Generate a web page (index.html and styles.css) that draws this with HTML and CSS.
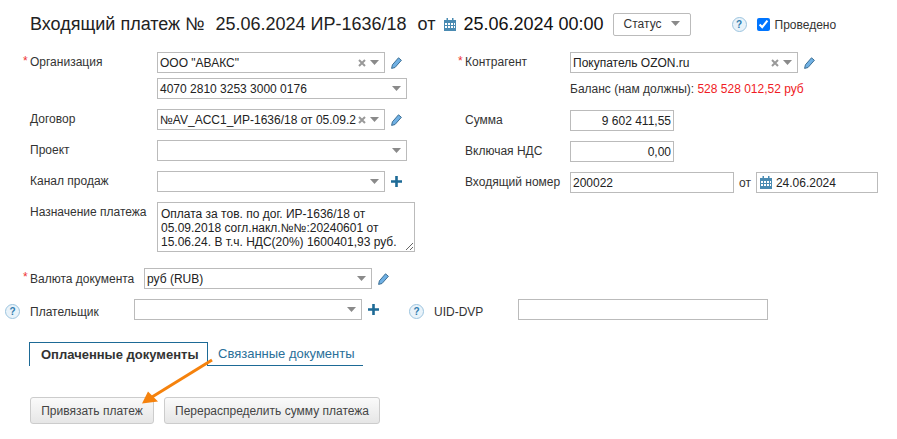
FILE: index.html
```html
<!DOCTYPE html>
<html lang="en">
<head>
    <meta charset="UTF-8">
    <title>Входящий платеж</title>
    <link rel="stylesheet" href="styles.css">
</head>
<body>
    <svg class="sprites" width="0" height="0">
        <symbol id="i-caret" viewBox="0 0 9 5"><path d="M0 0h9L4.5 5z" fill="#8a8a8a"/></symbol>
        <symbol id="i-clear" viewBox="0 0 8 8"><path d="M1 1l6 6M7 1L1 7" stroke="#999" stroke-width="2" fill="none"/></symbol>
        <symbol id="i-pencil" viewBox="0 0 11 12"><path d="M7.5 .8L10.400 3.300 4 10.500 .6 11.400l.8-3.600z" fill="#6fb0e4" stroke="#3d6f93" stroke-width="1"/></symbol>
        <symbol id="i-plus" viewBox="0 0 11 11"><path d="M5.5 0v11M0 5.500h11" stroke="#1d6a96" stroke-width="2.600" fill="none"/></symbol>
        <symbol id="i-cal" viewBox="0 0 12 13">
            <path d="M0 2h12v11H0z" fill="#4a8bb2"/>
            <path d="M2.500 0h1.500v3H2.500zM8 0h1.500v3H8z" fill="#4a8bb2"/>
            <path d="M1 5h2v2H1zM4 5h2v2H4zM7 5h2v2H7zM10 5h1v2h-1zM1 8h2v2H1zM4 8h2v2H4zM7 8h2v2H7zM10 8h1v2h-1z" fill="#fff"/>
        </symbol>
    </svg>

    <div class="page">
        <div class="head">
            <span class="title">Входящий платеж №</span>
            <span class="title num">25.06.2024 ИР-1636/18</span>
            <span class="title ot">от</span>
            <svg class="ico-cal"><use href="#i-cal"/></svg>
            <span class="title date">25.06.2024 00:00</span>
            <button class="status">Статус <svg class="caret"><use href="#i-caret"/></svg></button>
            <span class="help head-help">?</span>
            <input type="checkbox" class="posted" checked>
            <span class="posted-lbl">Проведено</span>
        </div>

        <div class="cols">
            <div class="col-left">
                <div class="row">
                    <label class="lbl req">Организация</label>
                    <div class="combo w228"><span class="val">ООО "АВАКС"</span><svg class="x"><use href="#i-clear"/></svg><svg class="caret"><use href="#i-caret"/></svg></div>
                    <svg class="pencil"><use href="#i-pencil"/></svg>
                </div>
                <div class="row tight">
                    <label class="lbl"></label>
                    <div class="combo w250"><span class="val">4070 2810 3253 3000 0176</span><svg class="caret"><use href="#i-caret"/></svg></div>
                </div>
                <div class="row">
                    <label class="lbl">Договор</label>
                    <div class="combo w228"><span class="val">№AV_ACC1_ИР-1636/18 от 05.09.2</span><svg class="x"><use href="#i-clear"/></svg><svg class="caret"><use href="#i-caret"/></svg></div>
                    <svg class="pencil"><use href="#i-pencil"/></svg>
                </div>
                <div class="row">
                    <label class="lbl">Проект</label>
                    <div class="combo w250"><span class="val"></span><svg class="caret"><use href="#i-caret"/></svg></div>
                </div>
                <div class="row">
                    <label class="lbl">Канал продаж</label>
                    <div class="combo w228"><span class="val"></span><svg class="caret"><use href="#i-caret"/></svg></div>
                    <svg class="plus"><use href="#i-plus"/></svg>
                </div>
                <div class="row">
                    <label class="lbl">Назначение платежа</label>
                    <textarea class="purpose">Оплата за тов. по дог. ИР-1636/18 от 05.09.2018 согл.накл.№№:20240601 от 15.06.24. В т.ч. НДС(20%) 1600401,93 руб.</textarea>
                </div>
            </div>

            <div class="col-right">
                <div class="row">
                    <label class="lbl-r req">Контрагент</label>
                    <div class="combo w228"><span class="val">Покупатель OZON.ru</span><svg class="x"><use href="#i-clear"/></svg><svg class="caret"><use href="#i-caret"/></svg></div>
                    <svg class="pencil"><use href="#i-pencil"/></svg>
                </div>
                <div class="row balance-row">
                    <label class="lbl-r"></label>
                    <span class="balance">Баланс (нам должны): <span class="red">528 528 012,52 руб</span></span>
                </div>
                <div class="row">
                    <label class="lbl-r">Сумма</label>
                    <input class="field amount" value="9 602 411,55">
                </div>
                <div class="row">
                    <label class="lbl-r">Включая НДС</label>
                    <input class="field amount" value="0,00">
                </div>
                <div class="row">
                    <label class="lbl-r">Входящий номер</label>
                    <input class="field incoming" value="200022">
                    <span class="from">от</span>
                    <div class="datebox"><svg class="ico-cal"><use href="#i-cal"/></svg>24.06.2024</div>
                </div>
            </div>
        </div>

        <div class="row currency">
            <label class="lbl-cur req">Валюта документа</label>
            <div class="combo w228"><span class="val">руб (RUB)</span><svg class="caret"><use href="#i-caret"/></svg></div>
            <svg class="pencil"><use href="#i-pencil"/></svg>
        </div>

        <div class="row payer">
            <span class="help">?</span>
            <label class="lbl-pay">Плательщик</label>
            <div class="combo w228"><span class="val"></span><svg class="caret"><use href="#i-caret"/></svg></div>
            <svg class="plus"><use href="#i-plus"/></svg>
            <span class="help uid-help">?</span>
            <label class="lbl-uid">UID-DVP</label>
            <input class="field uid">
        </div>

        <div class="tabs">
            <div class="tab active">Оплаченные документы</div>
            <div class="tab">Связанные документы</div>
        </div>

        <div class="actions">
            <button class="btn bind">Привязать платеж</button>
            <button class="btn">Перераспределить сумму платежа</button>
        </div>

        <svg class="arrow" width="90" height="60" viewBox="0 0 90 60">
            <path d="M72 4L12 41" stroke="#f5820d" stroke-width="3" fill="none"/>
            <path d="M2 47.500L8 35.500l10 10z" fill="#f5820d"/>
        </svg>
    </div>
</body>
</html>
```

FILE: styles.css
```css
* {
    box-sizing: border-box;
}
html, body {
    margin: 0;
    background: #fff;
}
body {
    font-family: 'Liberation Sans', Arial, sans-serif;
    font-size: 12px;
    color: #333;
}
.sprites {
    display: block;
}
.page {
    position: relative;
    width: 897px;
    height: 439px;
    overflow: hidden;
    padding-top: 13px;
}

/* header */
.head {
    display: flex;
    align-items: center;
    height: 23px;
    margin-bottom: 16px;
    padding-left: 30px;
}
.title {
    font-size: 18px;
    color: #222;
    white-space: nowrap;
}
.num {
    margin-left: 11px;
}
.ot {
    margin-left: 11px;
}
.head .ico-cal {
    margin-left: 9px;
}
.date {
    margin-left: 7px;
    color: #111;
}
.status {
    display: flex;
    align-items: center;
    justify-content: center;
    gap: 9px;
    width: 78px;
    height: 23px;
    margin-left: 9px;
    padding: 0 0 2px;
    background: #fff;
    border: 1px solid #bbb;
    border-radius: 2px;
    font: 12px 'Liberation Sans', Arial, sans-serif;
    color: #333;
}
.help {
    display: flex;
    align-items: center;
    justify-content: center;
    flex: none;
    width: 15px;
    height: 15px;
    background: #e9f3fa;
    border: 1px solid #9cc4df;
    border-radius: 50%;
    font-size: 10px;
    font-weight: bold;
    color: #2f7cae;
}
.head-help {
    margin-left: 41px;
}
.posted {
    width: 13px;
    height: 13px;
    margin: 0 0 0 10px;
    accent-color: #0075ff;
}
.posted-lbl {
    margin-left: 5px;
}

/* columns */
.cols {
    display: flex;
}
.col-left {
    width: 465px;
    padding-left: 30px;
}
.row {
    display: flex;
    align-items: flex-start;
    margin-bottom: 10px;
}
.row.tight {
    margin-top: -5px;
}
.lbl, .lbl-r, .lbl-cur, .lbl-pay, .lbl-uid {
    position: relative;
    flex: none;
    padding-top: 1px;
    line-height: 19px;
}
.lbl {
    width: 127px;
}
.lbl-r {
    width: 105px;
}
.lbl-cur {
    width: 114px;
    padding-top: 2px;
}
.req::before {
    content: "*";
    position: absolute;
    left: -7px;
    top: 0;
    color: #e33;
}

/* inputs */
.combo {
    display: flex;
    align-items: center;
    flex: none;
    height: 21px;
    padding: 0 5px 0 2px;
    background: #fff;
    border: 1px solid #bbb;
}
.w228 {
    width: 228px;
}
.w250 {
    width: 250px;
}
.val {
    flex: 1;
    min-width: 0;
    padding-top: 1px;
    white-space: nowrap;
    color: #222;
}
.x {
    flex: none;
    width: 8px;
    height: 8px;
    margin-left: 4px;
}
.caret {
    flex: none;
    width: 9px;
    height: 5px;
    margin-left: 4px;
}
.status .caret {
    margin-left: 0;
}
.pencil {
    flex: none;
    width: 11px;
    height: 12px;
    margin: 5px 0 0 6px;
}
.plus {
    flex: none;
    width: 11px;
    height: 11px;
    margin: 5px 0 0 6px;
}
.ico-cal {
    flex: none;
    width: 12px;
    height: 13px;
}
.purpose {
    width: 258px;
    height: 50px;
    padding: 4px 3px 2px;
    border: 1px solid #bbb;
    border-radius: 0;
    outline: 0;
    font: 12px/14px 'Liberation Sans', Arial, sans-serif;
    color: #222;
}
.field {
    flex: none;
    height: 21px;
    padding: 0 2px;
    border: 1px solid #bbb;
    outline: 0;
    font: 12px 'Liberation Sans', Arial, sans-serif;
    color: #222;
}
.amount {
    width: 104px;
    text-align: right;
}
.incoming {
    width: 164px;
}
.from {
    margin: 3px 5px 0 5px;
    line-height: 17px;
}
.datebox {
    display: flex;
    align-items: center;
    gap: 4px;
    width: 122px;
    height: 21px;
    padding-left: 3px;
    border: 1px solid #bbb;
    color: #222;
}
.balance-row {
    margin-top: -2px;
    margin-bottom: 12px;
}
.balance {
    line-height: 17px;
}
.red {
    color: #f01b24;
}

/* lower rows */
.currency {
    margin-top: 6px;
    padding-left: 30px;
}
.payer {
    padding-left: 5px;
    margin-bottom: 0;
}
.payer .help {
    margin-top: 5px;
}
.lbl-pay {
    width: 104px;
    margin-left: 10px;
    padding-top: 5px;
    line-height: 16px;
}
.uid-help {
    margin-left: 30px;
}
.lbl-uid {
    width: 84px;
    margin-left: 10px;
    padding-top: 5px;
    line-height: 16px;
}
.uid {
    width: 250px;
}

/* tabs */
.tabs {
    display: flex;
    height: 24px;
    margin: 22px 0 0 29px;
}
.tab {
    padding: 4px 8px 0 10px;
    font-size: 13px;
    line-height: 16px;
    color: #2a6f99;
    border-bottom: 1px solid #1d6a96;
}
.tab.active {
    width: 179px;
    padding: 4px 0 0 11px;
    font-weight: bold;
    color: #333;
    border: 1px solid #1d6a96;
    border-bottom: 0;
}

/* buttons */
.actions {
    display: flex;
    gap: 10px;
    margin: 31px 0 0 30px;
}
.btn {
    height: 27px;
    padding: 0 10px;
    background: linear-gradient(#fafafa, #e6e6e6);
    border: 1px solid #ccc;
    border-radius: 3px;
    font: 12px 'Liberation Sans', Arial, sans-serif;
    color: #444;
}
.bind {
    width: 124px;
    padding: 0;
}

/* arrow drawn over the screenshot */
.arrow {
    position: absolute;
    left: 140px;
    top: 356px;
}
```
